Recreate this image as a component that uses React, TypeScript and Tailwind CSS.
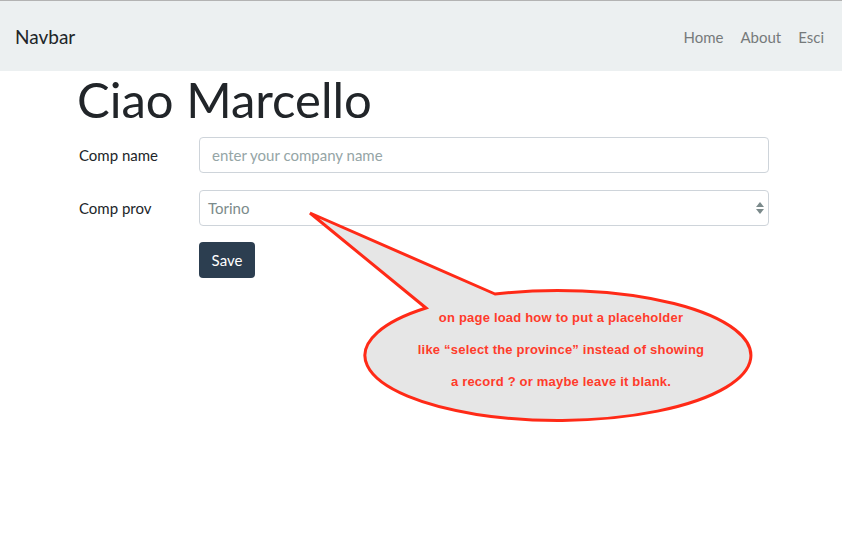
import React from "react";

export default function App() {
  return (
    <div className="relative w-full min-h-[541px] bg-white" style={{ fontFamily: "Lato, 'Open Sans', sans-serif" }}>
      <div className="border-t border-[#b3b3b3]">
        <nav className="h-[70px] bg-[#ecf0f1] flex items-center justify-between px-[15px] pt-[2px]">
          <span className="text-[19px] text-[#212529]">Navbar</span>
          <div className="flex items-center gap-[17px] text-[15px] text-[#767a7b] pr-[3px]">
            <span>Home</span>
            <span>About</span>
            <span>Esci</span>
          </div>
        </nav>
      </div>
      <main className="ml-[79px] w-[690px]">
        <h1 className="text-[49px] leading-[58px] text-[#212529] -ml-[2px] -mt-[1px]">Ciao Marcello</h1>
        <div className="mt-[9px] flex flex-col gap-[17px]">
          <div className="flex items-center">
            <label className="w-[120px] text-[15px] text-[#212529]">Comp name</label>
            <input
              className="flex-1 h-[36px] rounded-[4px] border border-[#ced4da] px-[12px] text-[15px] text-[#212529] placeholder:text-[#95a5a6] outline-none"
              placeholder="enter your company name"
            />
          </div>
          <div className="flex items-center">
            <label className="w-[120px] text-[15px] text-[#212529]">Comp prov</label>
            <div className="relative flex-1 h-[36px]">
              <div className="w-full h-full rounded-[4px] border border-[#ced4da] px-[8px] flex items-center text-[15px] text-[#7b8a8b]">
                Torino
              </div>
              <svg className="absolute right-[5px] top-[12px]" width="8" height="12" viewBox="0 0 8 12">
                <polygon points="4,0 8,5 0,5" fill="#7b8a8b" />
                <polygon points="0,7 8,7 4,12" fill="#7b8a8b" />
              </svg>
            </div>
          </div>
          <div className="flex -mt-[1px]">
            <div className="w-[120px]" />
            <button className="h-[36px] w-[56px] rounded-[4px] bg-[#2c3e50] text-white text-[15px]">Save</button>
          </div>
        </div>
      </main>

      <svg className="absolute left-0 top-0 pointer-events-none" width="842" height="541" viewBox="0 0 842 541">
        <path
          d="M495 294 L310 213 L426 308 A193 65 0 1 0 495 294 Z"
          fill="#e6e6e6"
          stroke="#ff2a17"
          strokeWidth="3"
          strokeLinejoin="miter"
        />
      </svg>
      <div
        className="absolute left-[361px] top-[302px] w-[400px] text-center text-[13px] tracking-[0.2px] leading-[32px] font-bold text-[#ff3b2b] pointer-events-none"
        style={{ fontFamily: "'Liberation Sans', Arial, sans-serif" }}
      >
        <div>on page load how to put a placeholder</div>
        <div>like “select the province” instead of showing</div>
        <div>a record ? or maybe leave it blank.</div>
      </div>
    </div>
  );
}
